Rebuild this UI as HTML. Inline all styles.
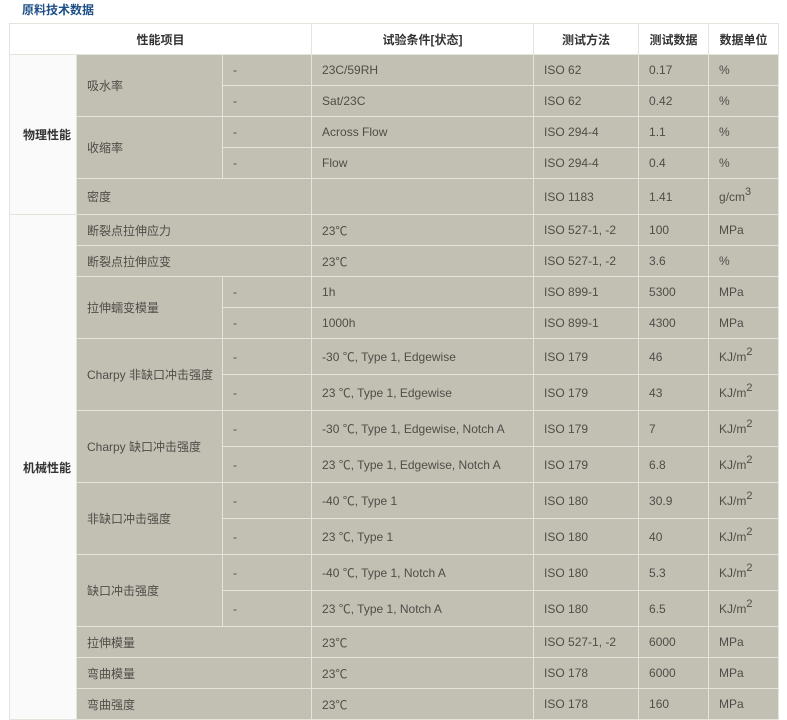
<!DOCTYPE html>
<html><head><meta charset="utf-8"><style>
body{margin:0;background:#fff;width:787px;height:719px;overflow:hidden;font-family:"Liberation Sans","Noto Sans CJK SC",sans-serif;}
.t{position:absolute;left:22px;top:1px;font-size:12px;font-weight:bold;color:#1d4f86;}
table{position:absolute;left:9px;top:23px;border-collapse:collapse;table-layout:fixed;width:769px;font-size:12px;color:#4e4e48;}
td{border:1px solid #e4e4dc;background:#c2bfb3;padding:0 0 0 10px;white-space:nowrap;overflow:hidden;}
tr.h td{background:#fff;font-weight:bold;color:#333;text-align:center;padding:0;}
td.c{background:#fafafa;font-weight:bold;color:#333;text-align:center;padding:0 0 0 8px;}
sup{font-size:11px;vertical-align:6px;line-height:0}
</style></head><body>
<div class="t">原料技术数据</div>
<table>
<colgroup><col style="width:67px"><col style="width:146px"><col style="width:89px"><col style="width:222px"><col style="width:105px"><col style="width:70px"><col style="width:70px"></colgroup>
<tr class="h" style="height:31px"><td colspan="3">性能项目</td><td>试验条件[状态]</td><td>测试方法</td><td>测试数据</td><td>数据单位</td></tr>
<tr style="height:31px"><td class="c" rowspan="5">物理性能</td><td rowspan="2">吸水率</td><td>-</td><td>23C/59RH</td><td>ISO 62</td><td>0.17</td><td>%</td></tr>
<tr style="height:31px"><td>-</td><td>Sat/23C</td><td>ISO 62</td><td>0.42</td><td>%</td></tr>
<tr style="height:31px"><td rowspan="2">收缩率</td><td>-</td><td>Across Flow</td><td>ISO 294-4</td><td>1.1</td><td>%</td></tr>
<tr style="height:31px"><td>-</td><td>Flow</td><td>ISO 294-4</td><td>0.4</td><td>%</td></tr>
<tr style="height:36px"><td colspan="2">密度</td><td></td><td>ISO 1183</td><td>1.41</td><td>g/cm<sup>3</sup></td></tr>
<tr style="height:31px"><td class="c" rowspan="16">机械性能</td><td colspan="2">断裂点拉伸应力</td><td>23℃</td><td>ISO 527-1, -2</td><td>100</td><td>MPa</td></tr>
<tr style="height:31px"><td colspan="2">断裂点拉伸应变</td><td>23℃</td><td>ISO 527-1, -2</td><td>3.6</td><td>%</td></tr>
<tr style="height:31px"><td rowspan="2">拉伸蠕变模量</td><td>-</td><td>1h</td><td>ISO 899-1</td><td>5300</td><td>MPa</td></tr>
<tr style="height:31px"><td>-</td><td>1000h</td><td>ISO 899-1</td><td>4300</td><td>MPa</td></tr>
<tr style="height:36px"><td rowspan="2">Charpy 非缺口冲击强度</td><td>-</td><td>-30 ℃, Type 1, Edgewise</td><td>ISO 179</td><td>46</td><td>KJ/m<sup>2</sup></td></tr>
<tr style="height:36px"><td>-</td><td>23 ℃, Type 1, Edgewise</td><td>ISO 179</td><td>43</td><td>KJ/m<sup>2</sup></td></tr>
<tr style="height:36px"><td rowspan="2">Charpy 缺口冲击强度</td><td>-</td><td>-30 ℃, Type 1, Edgewise, Notch A</td><td>ISO 179</td><td>7</td><td>KJ/m<sup>2</sup></td></tr>
<tr style="height:36px"><td>-</td><td>23 ℃, Type 1, Edgewise, Notch A</td><td>ISO 179</td><td>6.8</td><td>KJ/m<sup>2</sup></td></tr>
<tr style="height:36px"><td rowspan="2">非缺口冲击强度</td><td>-</td><td>-40 ℃, Type 1</td><td>ISO 180</td><td>30.9</td><td>KJ/m<sup>2</sup></td></tr>
<tr style="height:36px"><td>-</td><td>23 ℃, Type 1</td><td>ISO 180</td><td>40</td><td>KJ/m<sup>2</sup></td></tr>
<tr style="height:36px"><td rowspan="2">缺口冲击强度</td><td>-</td><td>-40 ℃, Type 1, Notch A</td><td>ISO 180</td><td>5.3</td><td>KJ/m<sup>2</sup></td></tr>
<tr style="height:36px"><td>-</td><td>23 ℃, Type 1, Notch A</td><td>ISO 180</td><td>6.5</td><td>KJ/m<sup>2</sup></td></tr>
<tr style="height:31px"><td colspan="2">拉伸模量</td><td>23℃</td><td>ISO 527-1, -2</td><td>6000</td><td>MPa</td></tr>
<tr style="height:31px"><td colspan="2">弯曲模量</td><td>23℃</td><td>ISO 178</td><td>6000</td><td>MPa</td></tr>
<tr style="height:31px"><td colspan="2">弯曲强度</td><td>23℃</td><td>ISO 178</td><td>160</td><td>MPa</td></tr>
</table>
</body></html>
